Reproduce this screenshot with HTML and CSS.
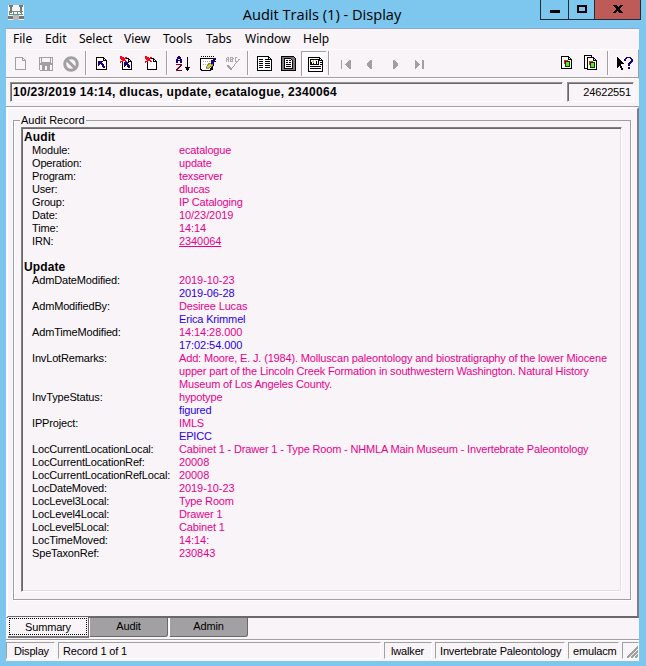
FILE: index.html
```html
<!DOCTYPE html>
<html lang="en"><head><meta charset="utf-8"><title>Audit Trails (1) - Display</title><link rel="stylesheet" href="styles.css"></head>
<body>
<div class="window">
<header class="titlebar">
 <svg class="appicon" width="16" height="15" viewBox="0 0 16 15"><path fill="#f5f3f5" d="M0 0h16v15H0z"/><path fill="#777" d="M1 0h4v2h-1v6h-2V2H1zM11 0h4v2h-1v6h-2V2h-1zM0 11h16v3H0z"/><path fill="#bbb" d="M5 10h6v5H5z"/><path stroke="#689186" fill="none" d="M1 6.500h14M1 9.500h14M1.500 7v3M5.500 7v3M9.500 7v3M13.500 7v3"/></svg>
 <h1>Audit Trails (1) - Display</h1>
 <div class="winbtns"><span class="min"><svg width="27" height="19"><path d="M9 10h10v3H9z"/></svg></span><span class="max"><svg width="25" height="19"><path fill="none" stroke="#000" stroke-width="2" d="M9 6h8v6H9z"/></svg></span><span class="close"><svg width="45" height="19"><path d="M18 5h4v1h1v1h1V6h1V5h3v1h-1v1h-1v1h-1v2h1v1h1v1h1v1h-4v-1h-1v-1h-1v1h-1v1h-3v-1h1v-1h1v-1h1V8h-1V7h-1V6h-1z"/></svg></span></div>
</header>
<main class="client">
<nav class="menu"><span class="m1">File</span><span class="m2">Edit</span><span class="m3">Select</span><span class="m4">View</span><span class="m5">Tools</span><span class="m6">Tabs</span><span class="m7">Window</span><span class="m8">Help</span></nav>
<div class="toolbar">
 <svg class="ic"><path fill="#f8f4f8" stroke="#a0a0a0" d="M7.500 6.500h7l3 3v9h-10zM14.500 6.500v3h3"/></svg>
 <svg class="ic"><path fill="none" stroke="#a0a0a0" d="M6.500 6.500h13v13h-12l-1-1zM8.500 6.500v5h9v-5M9.500 19v-4.500h7V19"/><path fill="#a0a0a0" d="M7 12h12v2H7zM10 15h2v4h-2zM14 15h2v4h-2z"/></svg>
 <svg class="ic soft"><circle cx="13" cy="13" r="6.300" fill="none" stroke="#a0a0a0" stroke-width="3"/><path stroke="#a0a0a0" stroke-width="3" d="M9 9l8 8"/></svg>
 <i class="sep"></i>
 <svg class="ic"><path class="page" d="M7.500 6.500h7l3 3v9h-10zM14.500 6.500v3h3"/><path fill="#17007c" d="M9 10h5v1h-1v1h1v1h1v2h1v2h-2v-1h-1v-2h-1v-1h-1v1h-1v1H9z"/></svg>
 <svg class="ic"><path class="page" d="M8.500 7.500h6l3 3v8h-9zM14.500 7.500v3h3"/><path fill="#17007c" d="M10 11h5v1h-1v1h1v1h1v3h-2v-1h-1v-2h-1v1h-1v1h-1z"/><path fill="#ff0016" d="M6 5h2v1h2v1h1V6h2v1h-1v1h-1v1h1v1h1v1h-2v-1H9v1H7v1H6v-2h2V9H7V8H6z"/></svg>
 <svg class="ic"><path class="page" d="M8.500 7.500h6l3 3v8h-9zM14.500 7.500v3h3"/><path fill="#ff0016" d="M6 5h2v1h2v1h1V6h2v1h-1v1h-1v1h1v1h1v1h-2v-1H9v1H7v1H6v-2h2V9H7V8H6z"/></svg>
 <i class="sep"></i>
 <svg class="ic"><path fill="#17007c" d="M8 5h2v1h1v2h1v4h-2v-2H8v2H6V8h1V6h1zM8 8v1h2V8z" fill-rule="evenodd"/><path fill="#81001b" d="M6 13h6v2h-1v1h-1v1H9v1H8v1h4v1H6v-2h1v-1h1v-1h1v-1h1v-1H6z"/><path fill="#000" d="M17 6h1v10h2v1h-1v2h-1v1h-1v-1h-1v-2h-1v-1h2z"/></svg>
 <svg class="ic"><path fill="#fff" stroke="#000" d="M5.500 7.500h13v7l-4 5h-8l-1-2z"/><path stroke="#000" stroke-dasharray="1 1" d="M6 5.500h13M6 7.500h13"/><path stroke="#aaa" stroke-dasharray="1 1" d="M8 10.500h7M8 13.500h5"/><path fill="#d2d020" stroke="#444" stroke-width=".6" d="M11 17l3-5 4 2-4 3z"/><path fill="#17007c" d="M16 9h2V7h3v2h-1v1h1v1h-2v2h-3z"/><path fill="#000" d="M7 19h9v1H7zM17 15h1v4h-2v-2h1z"/></svg>
 <svg class="ic"><path fill="none" stroke="#aaa" d="M6.500 11V7.500l1-1h1V11M6.500 8.500h2M10.500 6v5M10 6.500h2l1 1-1 1h-2M12.500 8.500v2H10M17 6.500h-2v4h2M20 8.500h-1l-5 6"/><path fill="#a0a0a0" d="M7 14h2v1h1v1h1v1h1v-1h1v-1h1v1h-1v1h-1v2h-2v-1H9v-1H8v-1H7z"/></svg>
 <i class="sep"></i>
 <svg class="ic"><path class="page" d="M6.500 5.500h11l3 3v11h-14zM17.500 5.500v3h3"/><path class="ink" d="M8 8.500h4M14 8.500h3M8 10.500h4M14 10.500h5M8 12.500h4M14 12.500h5M8 14.500h4M14 14.500h5M8 16.500h4M14 16.500h5M6 19.500h15"/></svg>
 <svg class="ic"><path fill="#777" stroke="#000" d="M5.500 5.500h12l2 2v12h-14z"/><path class="page" d="M8.500 7.500h6l2 2v8h-8z"/><path class="ink" d="M10 9.500h2M10 11.500h2M13 9.500h2M13 11.500h2M10 13.500h5M10 15.500h5"/></svg>
 <svg class="ic pressed"><path class="page" d="M7.500 6.500h11l3 3v11h-14zM18.500 6.500v3h3"/><path fill="#fff" stroke="#000" d="M9.500 8.500h8v5h-8z"/><path stroke="#d6d030" d="M11 10.500h2M12.500 9v3"/><path class="ink" d="M10.500 13v-2M12.500 13v-1M15.500 13v-3M19 11.500h2M19 13.500h2M9 15.500h11M9 17.500h11"/></svg>
 <i class="sep"></i>
 <svg class="ic nav"><path d="M9 9h1v9H9zM17 9h2v9h-2v-1h-1v-1h-1v-1h-1v-1h-1v-1h1v-1h1v-1h1v-1h1z"/></svg>
 <svg class="ic nav"><path d="M13 9h2v9h-2v-1h-1v-1h-1v-1h-1v-3h1v-1h1v-1h1z"/></svg>
 <svg class="ic nav"><path d="M11 9h2v1h1v1h1v1h1v3h-1v1h-1v1h-1v1h-2z"/></svg>
 <svg class="ic nav"><path d="M8 9h1v1h1v1h1v1h1v1h1v1h-1v1h-1v1h-1v1H9v1H8zM15 9h2v9h-2z"/></svg>
 <span class="grow"></span>
 <svg class="ic"><path class="page" d="M7.500 5.500h7l3 3v9h-10zM14.500 5.500v3h3"/><path fill="#f31722" d="M10 9h4v4h-4z"/><path fill="#58f000" stroke="#123600" d="M11.500 10.500h4v5h-4z"/></svg>
 <svg class="ic"><path class="page" d="M5.500 4.500h7v13h-7z"/><path class="page" d="M8.500 6.500h6l3 3v9h-9zM14.500 6.500v3h3"/><path fill="#f31722" d="M10 10h4v4h-4z"/><path fill="#58f000" stroke="#123600" d="M11.500 11.500h4v5h-4z"/></svg>
 <i class="sep last"></i>
 <svg class="ic"><path fill="#000" d="M5 6h1v1h1v1h1v1h1v1h1v1h1v1h1v1h-3v2h1v2h1v2H9v-2H8v-2H7v1H6v1H5z"/><path fill="#17007c" d="M14 6h5v1h1v1h1v3h-1v1h-1v1h-1v2h-2v-3h1v-1h1v-1h1V8h-1V7h-3v1h-1v2h-2V8h1V7h1zM16 16h2v2h-2z"/></svg>
</div>
<div class="record"><div class="sum">10/23/2019 14:14, dlucas, update, ecatalogue, 2340064</div><div class="num">24622551</div></div>
<section class="panel">
<fieldset><legend>Audit Record</legend>
<div class="report">
<h2>Audit</h2>
<dl>
<dt>Module:</dt><dd>ecatalogue</dd>
<dt>Operation:</dt><dd>update</dd>
<dt>Program:</dt><dd>texserver</dd>
<dt>User:</dt><dd>dlucas</dd>
<dt>Group:</dt><dd>IP Cataloging</dd>
<dt>Date:</dt><dd class="figs">10/23/2019</dd>
<dt>Time:</dt><dd class="figs">14:14</dd>
<dt>IRN:</dt><dd class="figs"><u>2340064</u></dd>
</dl>
<h2 class="second">Update</h2>
<dl>
<dt>AdmDateModified:</dt><dd class="figs">2019-10-23<br><span class="old">2019-06-28</span></dd>
<dt>AdmModifiedBy:</dt><dd>Desiree Lucas<br><span class="old">Erica Krimmel</span></dd>
<dt>AdmTimeModified:</dt><dd class="figs">14:14:28.000<br><span class="old">17:02:54.000</span></dd>
<dt>InvLotRemarks:</dt><dd>Add: Moore, E. J. (1984). Molluscan paleontology and biostratigraphy of the lower Miocene<br>upper part of the Lincoln Creek Formation in southwestern Washington. Natural History<br>Museum of Los Angeles County.</dd>
<dt>InvTypeStatus:</dt><dd>hypotype<br><span class="old">figured</span></dd>
<dt>IPProject:</dt><dd>IMLS<br><span class="old">EPICC</span></dd>
<dt>LocCurrentLocationLocal:</dt><dd>Cabinet 1 - Drawer 1 - Type Room - NHMLA Main Museum - Invertebrate Paleontology</dd>
<dt>LocCurrentLocationRef:</dt><dd class="figs">20008</dd>
<dt>LocCurrentLocationRefLocal:</dt><dd class="figs">20008</dd>
<dt>LocDateMoved:</dt><dd class="figs">2019-10-23</dd>
<dt>LocLevel3Local:</dt><dd>Type Room</dd>
<dt>LocLevel4Local:</dt><dd>Drawer 1</dd>
<dt>LocLevel5Local:</dt><dd>Cabinet 1</dd>
<dt>LocTimeMoved:</dt><dd class="figs">14:14:</dd>
<dt>SpeTaxonRef:</dt><dd class="figs">230843</dd>
</dl>
</div></fieldset>
</section>
<div class="tabs"><span class="tab active"><b>Summary</b></span><span class="tab">Audit</span><span class="tab">Admin</span></div>
<footer class="status"><span class="s1">Display</span><span class="s2">Record 1 of 1</span><span class="s3">lwalker</span><span class="s4">Invertebrate Paleontology</span><span class="s5">emulacm</span><span class="s6"><svg width="13" height="13"><path stroke="#a0a0a0" stroke-width="1.500" d="M1 13L13 1M5 13l8-8M9 13l4-4"/></svg></span></footer>
</main>
</div>
</body></html>
```
FILE: styles.css
```css
* { box-sizing: border-box; }
body { margin: 0; background: #7dc6ee; font: 11px/13px "Liberation Sans", sans-serif; letter-spacing: -.16px; color: #000; }
.window { width: 646px; height: 666px; padding: 0 7px 5px 6px; overflow: hidden; }
svg { display: block; shape-rendering: crispEdges; }
.titlebar { height: 28px; display: flex; position: relative; }
.appicon { margin: 5px 0 0 2px; }
h1 { margin: 0 auto; position: absolute; left: 0; right: 0; text-align: center; font: 14.6px/28px "Open Sans", sans-serif; letter-spacing: 0; padding-right: 1px; }
.winbtns { position: absolute; right: -2px; top: 0; display: flex; height: 20px; border: 1px solid #222c33; border-top: 0; }
.winbtns span + span { border-left: 1px solid #222c33; }
.close { background: #be5a58; }
.client { height: 633px; background: #f8f4f8; border-top: 1px solid #91a7d2; display: flex; flex-direction: column; }
.menu { height: 20px; display: flex; padding-left: 7px; font: 12px/20px "Noto Sans", sans-serif; letter-spacing: 0; }
.m1 { width: 32px; } .m2 { width: 34px; } .m3 { width: 45px; } .m4 { width: 39px; } .m5 { width: 43px; } .m6 { width: 39px; } .m7 { width: 58px; }
.toolbar { height: 30px; border-top: 1px solid #fff; border-bottom: 1px solid #fff; border-right: 1px solid #a0a0a0; box-shadow: inset 0 -1px #a0a0a0; padding: 1px 1px 0 2px; display: flex; }
.ic { width: 25px; height: 25px; flex: none; }
.soft { shape-rendering: auto; }
.page { fill: #fff; stroke: #000; }
.ink { fill: none; stroke: #000; }
.nav { fill: #a0a0a0; }
.pressed { background: #fcfafc; box-shadow: inset 1px 1px #a0a0a0; }
.sep { width: 1px; height: 24px; margin: 0 3px 0 2px; background: #a0a0a0; box-shadow: 1px 0 #fff; }
.sep.last { margin: 0 4px 0 3px; }
.grow { flex: 1; }
.record { height: 28px; flex: none; padding: 3px 5px 0 4px; display: flex; gap: 4px; border-bottom: 1px solid #a0a0a0; }
.record > div { height: 20px; border: 1px solid; border-color: #909090 #fff #fff #909090; box-shadow: inset 1px 1px #696969; line-height: 18px; }
.sum { flex: 1; padding-left: 2px; font-weight: bold; letter-spacing: .31px; font-size: 12px; }
.num { width: 67px; text-align: right; padding-right: 2px; }
.panel { flex: 1; border-top: 2px solid #fff; border-left: 2px solid #fff; border-right: 2px solid #807d80; border-bottom: 2px solid #696969; padding: 5px 6px 0 5px; }
fieldset { margin: 0; padding: 0 8px 0 7px; height: 486px; border: 1px solid #a0a0a0; box-shadow: 1px 1px #fff, inset 1px 0 #fff; min-width: 0; }
legend { height: 13px; padding: 0 1px; margin-left: -1px; letter-spacing: 0; }
.report { height: 465px; border: 1px solid; border-color: #808080 #fff #fff #808080; box-shadow: inset 1px 1px #696969, inset -1px -1px #e3e0e3; padding: 3px 0 0 2px; }
h2 { margin: 0; font: bold 12px/13px "Liberation Sans", sans-serif; letter-spacing: .1px; }
.second { margin-top: 13px; }
dl { display: grid; grid-template-columns: 147px 1fr; margin: 0 0 0 8px; }
dt, dd { margin: 0; white-space: nowrap; }
dd { color: #e8008c; }
.figs { letter-spacing: -.08px; }
.old { color: #2b00e6; }
.tabs { height: 22px; flex: none; display: flex; padding-left: 2px; border-bottom: 1px solid #a0a0a0; box-shadow: 0 1px #fff; align-items: flex-start; }
.tab { text-align: center; background: #a3a0a3; border: 1px solid #696969; border-top: 0; border-left-color: #fff; height: 19px; line-height: 17px; border-radius: 0 0 3px 0; width: 79px; margin-left: 1px; }
.active { width: 81px; height: 21px; margin: -1px -1px 0 0; background: #f8f4f8; border: 0; border-right: 1px solid #696969; border-bottom: 2px solid #777; padding: 1px 1px 1px; border-radius: 0; position: relative; }
.active b { font-weight: normal; display: block; height: 17px; line-height: 16px; border: 1px dotted #000; }
.status { height: 21px; flex: none; padding: 2px 0 2px; display: flex; gap: 3px; line-height: 16px; }
.status span { border: 1px solid; border-color: #a0a0a0 #fff #fff #a0a0a0; height: 17px; padding-left: 4px; white-space: nowrap; }
.s1 { width: 49px; padding-left: 7px !important; } .s2 { flex: 1; } .s3 { width: 48px; padding-left: 6px !important; } .s4 { width: 130px; } .s5 { width: 51px; } .s6 { width: 17px; padding: 2px 0 0 3px !important; overflow: hidden; }
```
